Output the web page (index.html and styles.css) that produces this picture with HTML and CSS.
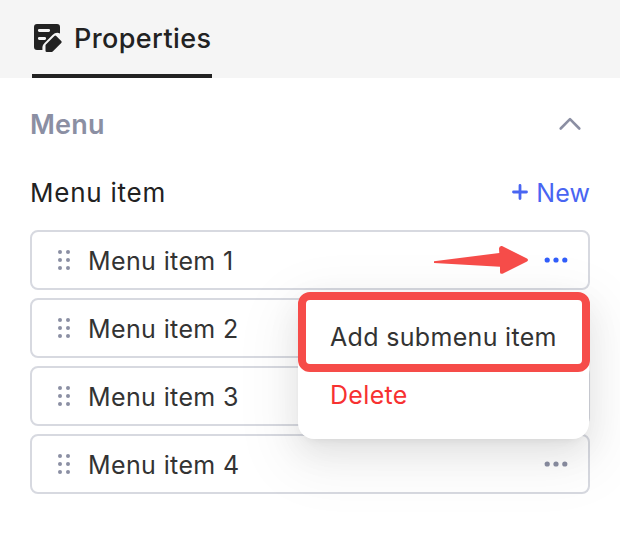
FILE: index.html
```html
<!DOCTYPE html>
<html lang="en">
<head>
<meta charset="utf-8">
<title>Properties</title>
<link rel="stylesheet" href="styles.css">
</head>
<body>
<header class="tabs">
  <div class="tab">
    <svg class="tab-icon" width="30" height="30" viewBox="0 0 30 30">
      <path d="M5 2H25Q28 2 28 5V11.500Q24 9.600 20.500 13L12.600 20.900Q10.400 23 10.400 25V28H5Q2 28 2 25V5Q2 2 5 2Z" fill="#222"/>
      <path d="M7.300 8.500H16.700M7.300 16.500H12.700" stroke="#f5f5f5" stroke-width="2.800" stroke-linecap="round"/>
      <path d="M14.800 23.500L23.300 15L28.300 20L19.800 28.700H14.800Z" fill="#222" stroke="#222" stroke-width="2.600" stroke-linejoin="round"/>
    </svg>
    <span class="tab-label">Properties</span>
  </div>
</header>
<main class="panel">
  <div class="section-head">
    <h2 class="section-title">Menu</h2>
    <svg class="chevron" width="24" height="16" viewBox="0 0 24 16"><path d="M2.700 12.500L12 3.200L21.300 12.500" fill="none" stroke="#8b8fa3" stroke-width="2.600" stroke-linecap="round" stroke-linejoin="round"/></svg>
  </div>
  <div class="list-head">
    <span class="list-title">Menu item</span>
    <span class="new-button">
      <svg width="16" height="16" viewBox="0 0 16 16"><path d="M8 1.500V14.500M1.500 8H14.500" stroke="#4965f2" stroke-width="2.800" stroke-linecap="round"/></svg>
      <span class="new-label">New</span>
    </span>
  </div>
  <div class="items">
    <div class="item">
      <svg class="grip" width="12" height="20" viewBox="0 0 12 20"><g fill="#8b8fa3"><circle cx="2" cy="2" r="2"/><circle cx="10" cy="2" r="2"/><circle cx="2" cy="10" r="2"/><circle cx="10" cy="10" r="2"/><circle cx="2" cy="18" r="2"/><circle cx="10" cy="18" r="2"/></g></svg>
      <span class="item-label">Menu item 1</span>
      <svg class="more active" width="24" height="6" viewBox="0 0 24 6"><circle cx="3.200" cy="3" r="2.600"/><circle cx="12" cy="3" r="2.600"/><circle cx="20.800" cy="3" r="2.600"/></svg>
    </div>
    <div class="item">
      <svg class="grip" width="12" height="20" viewBox="0 0 12 20"><g fill="#8b8fa3"><circle cx="2" cy="2" r="2"/><circle cx="10" cy="2" r="2"/><circle cx="2" cy="10" r="2"/><circle cx="10" cy="10" r="2"/><circle cx="2" cy="18" r="2"/><circle cx="10" cy="18" r="2"/></g></svg>
      <span class="item-label">Menu item 2</span>
    </div>
    <div class="item">
      <svg class="grip" width="12" height="20" viewBox="0 0 12 20"><g fill="#8b8fa3"><circle cx="2" cy="2" r="2"/><circle cx="10" cy="2" r="2"/><circle cx="2" cy="10" r="2"/><circle cx="10" cy="10" r="2"/><circle cx="2" cy="18" r="2"/><circle cx="10" cy="18" r="2"/></g></svg>
      <span class="item-label">Menu item 3</span>
    </div>
    <div class="item">
      <svg class="grip" width="12" height="20" viewBox="0 0 12 20"><g fill="#8b8fa3"><circle cx="2" cy="2" r="2"/><circle cx="10" cy="2" r="2"/><circle cx="2" cy="10" r="2"/><circle cx="10" cy="10" r="2"/><circle cx="2" cy="18" r="2"/><circle cx="10" cy="18" r="2"/></g></svg>
      <span class="item-label">Menu item 4</span>
      <svg class="more" width="24" height="6" viewBox="0 0 24 6"><circle cx="3.200" cy="3" r="2.600"/><circle cx="12" cy="3" r="2.600"/><circle cx="20.800" cy="3" r="2.600"/></svg>
    </div>
  </div>
</main>
<div class="popup">
  <div class="option highlighted">Add submenu item</div>
  <div class="option danger">Delete</div>
</div>
<svg class="arrow" width="98" height="30" viewBox="0 0 98 30"><path d="M2 16.200L67.300 8L67 3.500Q67.300 0.500 70 1L95 13.500Q97 15 95 16.500L70.500 28.700Q67.800 29.500 68 26.500V21.800L2 18Z" fill="#f64c49"/></svg>
</body>
</html>
```

FILE: styles.css
```css
* { box-sizing: border-box; }
body {
  margin: 0;
  height: 560px;
  position: relative;
  overflow: hidden;
  background: #fff;
  color: #333;
  font-family: Inter, "Liberation Sans", sans-serif;
  font-size: 25px;
  line-height: 32px;
}
svg { display: block; flex: none; }
.tabs {
  height: 78px;
  padding-left: 32px;
  display: flex;
  background: #f5f5f5;
}
.tab {
  width: 180px;
  padding-top: 22px;
  display: flex;
  align-items: flex-start;
  border-bottom: 4px solid #222;
}
.tab-label {
  margin-left: 12px;
  padding-top: 1px;
  color: #222;
  font-size: 27px;
  font-weight: 500;
  letter-spacing: 0.400px;
  white-space: nowrap;
}
.panel { padding: 30px 30px 0; }
.section-head, .list-head {
  height: 32px;
  display: flex;
  justify-content: space-between;
  align-items: center;
}
.section-title {
  margin: 0;
  padding-top: 2px;
  color: #8b8fa3;
  font-size: 27px;
  font-weight: 600;
  letter-spacing: 0.200px;
}
.chevron { margin-right: 8px; }
.list-head { margin-top: 36px; }
.list-title {
  padding-top: 1px;
  color: #222;
  font-size: 26px;
  line-height: 31px;
  letter-spacing: 0.750px;
}
.new-button {
  display: flex;
  align-items: center;
  gap: 8px;
  color: #4965f2;
}
.new-label { padding-top: 2px; letter-spacing: 0.100px; }
.items {
  margin-top: 22px;
  display: grid;
  gap: 8px;
}
.item {
  height: 60px;
  padding: 0 20px 0 26px;
  display: flex;
  align-items: center;
  border: 2px solid #d7d9e0;
  border-radius: 8px;
}
.item-label { margin-left: 18px; padding-top: 2px; letter-spacing: 0.380px; }
.more { margin-left: auto; fill: #8b8fa3; }
.more.active { fill: #315efb; }
.popup {
  position: absolute;
  left: 298px;
  top: 292px;
  width: 291px;
  height: 147px;
  border-radius: 16px;
  background: #fff;
  box-shadow:
    0 6px 12px -8px rgba(0, 0, 0, 0.120),
    0 12px 32px rgba(0, 0, 0, 0.080),
    0 18px 56px 16px rgba(0, 0, 0, 0.050);
}
.option {
  padding-left: 32px;
  letter-spacing: 0.320px;
  white-space: nowrap;
}
.highlighted {
  width: 292px;
  height: 80px;
  padding: 21px 0 0 24px;
  border: 8px solid #f64c49;
  border-radius: 12px;
}
.danger { margin-top: 7px; color: #f73131; }
.arrow {
  position: absolute;
  left: 432px;
  top: 245px;
}
```
